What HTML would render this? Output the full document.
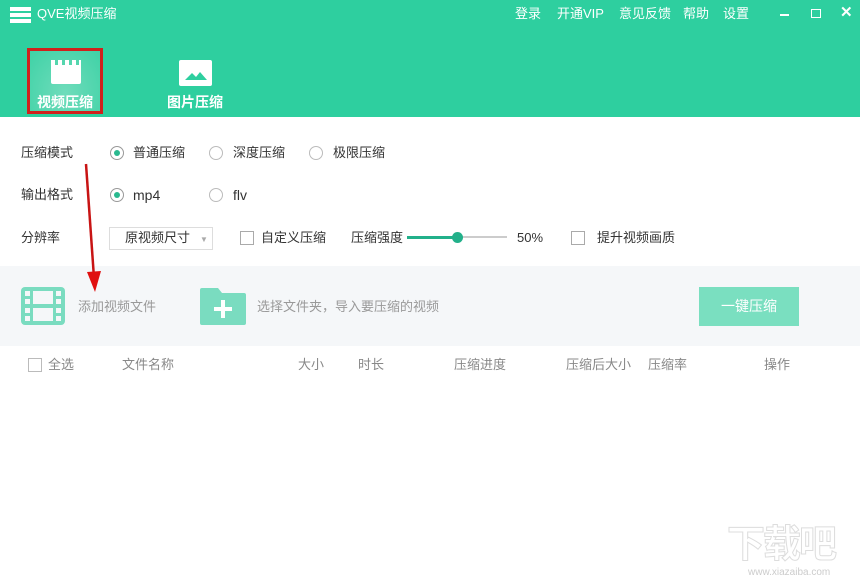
<!DOCTYPE html>
<html><head><meta charset="utf-8"><style>
*{margin:0;padding:0;box-sizing:border-box}
body{width:860px;height:580px;overflow:hidden;background:#fff;font-family:"Liberation Sans","Noto Sans CJK SC",sans-serif;position:relative;color:#333;font-size:13px;line-height:16px}
.a{position:absolute;white-space:nowrap}
.hdr{position:absolute;left:0;top:0;width:860px;height:117px;background:#2ecf9f}
.w{color:#fff}
.radio{position:absolute;width:14px;height:14px;border:1px solid #bbb;border-radius:50%;background:#fff}
.radio.on{border-color:#999}
.radio.on::after{content:"";position:absolute;left:3px;top:3px;width:6px;height:6px;border-radius:50%;background:#2ab98f}
.cb{position:absolute;width:14px;height:14px;border:1px solid #aaa;background:#fff}
.g{color:#999}
</style></head><body>
<div class="hdr"></div>
<div class="a" style="left:10px;top:7px;width:21px;height:4px;background:#fff"></div>
<div class="a" style="left:10px;top:13px;width:21px;height:4px;background:#fff"></div>
<div class="a" style="left:10px;top:19px;width:21px;height:4px;background:#fff"></div>
<div class="a w" style="left:37px;top:6px">QVE视频压缩</div>
<div class="a w" style="left:515px;top:6px">登录</div>
<div class="a w" style="left:557px;top:6px">开通VIP</div>
<div class="a w" style="left:619px;top:6px">意见反馈</div>
<div class="a w" style="left:683px;top:6px">帮助</div>
<div class="a w" style="left:723px;top:6px">设置</div>
<div class="a" style="left:780px;top:14px;width:9px;height:2px;background:#fff"></div>
<div class="a" style="left:811px;top:9px;width:10px;height:9px;border:1.5px solid #fff"></div>
<div class="a w" style="left:840px;top:5px;font-size:15px;font-weight:bold">✕</div>
<div class="a" style="left:27px;top:48px;width:76px;height:66px;border:3px solid #d0201c;background:radial-gradient(ellipse at 50% 70%,#6fdcbb,#3fd2a6)"></div>
<div class="a" style="left:51px;top:60px;width:30px;height:24px;background:#fff;border-radius:2px"></div>
<div class="a" style="left:51px;top:60px;width:30px;height:5px;background:repeating-linear-gradient(90deg,#fff 0 4px,#55d6ae 4px 7px)"></div>
<div class="a w" style="left:37px;top:94px;font-size:14px;font-weight:bold">视频压缩</div>
<div class="a" style="left:179px;top:60px;width:33px;height:26px;background:#fff;border-radius:2px"></div>
<svg class="a" style="left:183px;top:68px" width="26" height="14"><polygon points="2,12 9,5 13,9 17,4 24,12" fill="#2ecf9f"/></svg>
<div class="a w" style="left:167px;top:94px;font-size:14px;font-weight:bold">图片压缩</div>
<div class="a" style="left:21px;top:145px">压缩模式</div>
<div class="radio on" style="left:110px;top:146px"></div><div class="a" style="left:133px;top:145px">普通压缩</div>
<div class="radio" style="left:209px;top:146px"></div><div class="a" style="left:233px;top:145px">深度压缩</div>
<div class="radio" style="left:309px;top:146px"></div><div class="a" style="left:333px;top:145px">极限压缩</div>
<div class="a" style="left:21px;top:187px">输出格式</div>
<div class="radio on" style="left:110px;top:188px"></div><div class="a" style="left:133px;top:187px;font-size:14px">mp4</div>
<div class="radio" style="left:209px;top:188px"></div><div class="a" style="left:233px;top:187px;font-size:14px">flv</div>
<div class="a" style="left:21px;top:230px">分辨率</div>
<div class="a" style="left:109px;top:227px;width:104px;height:23px;border:1px solid #ddd"></div>
<div class="a" style="left:125px;top:230px">原视频尺寸</div>
<div class="a" style="left:200px;top:232px;font-size:8px;color:#aaa">▼</div>
<div class="cb" style="left:240px;top:231px"></div><div class="a" style="left:261px;top:230px">自定义压缩</div>
<div class="a" style="left:351px;top:230px">压缩强度</div>
<div class="a" style="left:407px;top:236px;width:50px;height:3px;background:#22b08a"></div>
<div class="a" style="left:457px;top:236px;width:50px;height:2px;background:#ccc"></div>
<div class="a" style="left:452px;top:232px;width:11px;height:11px;border-radius:50%;background:#22b08a"></div>
<div class="a" style="left:517px;top:230px">50%</div>
<div class="cb" style="left:571px;top:231px"></div><div class="a" style="left:597px;top:230px">提升视频画质</div>
<div class="a" style="left:0;top:266px;width:860px;height:80px;background:#f5f7f9"></div>
<svg class="a" style="left:21px;top:287px" width="44" height="38"><rect x="0" y="0" width="44" height="38" rx="4" fill="#7adcc0"/><g fill="#f5f7f9"><rect x="4" y="4" width="5" height="5"/><rect x="4" y="12" width="5" height="5"/><rect x="4" y="21" width="5" height="5"/><rect x="4" y="29" width="5" height="5"/><rect x="35" y="4" width="5" height="5"/><rect x="35" y="12" width="5" height="5"/><rect x="35" y="21" width="5" height="5"/><rect x="35" y="29" width="5" height="5"/><rect x="12" y="4" width="20" height="13"/><rect x="12" y="21" width="20" height="13"/></g></svg>
<div class="a g" style="left:78px;top:299px">添加视频文件</div>
<svg class="a" style="left:200px;top:288px" width="46" height="37"><path d="M2 0h16l4 5h22a2 2 0 0 1 2 2v28a2 2 0 0 1-2 2H2a2 2 0 0 1-2-2V2a2 2 0 0 1 2-2z" fill="#7adcc0"/><rect x="21" y="12" width="4" height="18" fill="#fff"/><rect x="14" y="19" width="18" height="4" fill="#fff"/></svg>
<div class="a g" style="left:257px;top:299px">选择文件夹，导入要压缩的视频</div>
<div class="a" style="left:699px;top:287px;width:100px;height:39px;background:#7adfc0;color:#fff;font-size:14px;text-align:center;line-height:39px">一键压缩</div>
<div class="cb" style="left:28px;top:358px;border-color:#bbb"></div>
<div class="a" style="left:48px;top:357px;color:#888">全选</div>
<div class="a" style="left:122px;top:357px;color:#888">文件名称</div>
<div class="a" style="left:298px;top:357px;color:#888">大小</div>
<div class="a" style="left:358px;top:357px;color:#888">时长</div>
<div class="a" style="left:454px;top:357px;color:#888">压缩进度</div>
<div class="a" style="left:566px;top:357px;color:#888">压缩后大小</div>
<div class="a" style="left:648px;top:357px;color:#888">压缩率</div>
<div class="a" style="left:764px;top:357px;color:#888">操作</div>
<svg class="a" style="left:0;top:0" width="860" height="580"><line x1="86" y1="164" x2="94" y2="278" stroke="#c81414" stroke-width="2.5"/><polygon points="87,272 101,271 95,292" fill="#e01010"/></svg>
<div class="a" style="left:727px;top:524px;font-size:38px;line-height:42px;font-weight:bold;color:#fff;-webkit-text-stroke:1px #ddd;letter-spacing:-2px">下载吧</div>
<div class="a" style="left:748px;top:567px;font-size:10px;line-height:12px;color:#ccc">www.xiazaiba.com</div>
</body></html>
